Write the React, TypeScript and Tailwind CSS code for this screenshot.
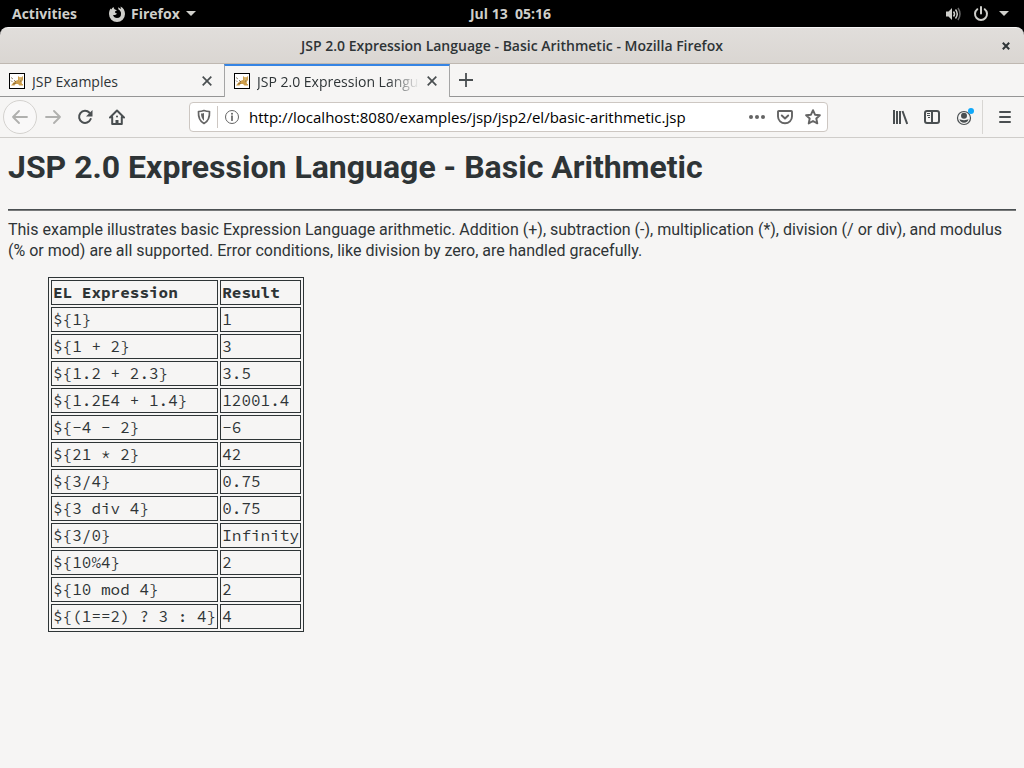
import React from "react";

const rows: [string, string][] = [
  ["${1}", "1"],
  ["${1 + 2}", "3"],
  ["${1.2 + 2.3}", "3.5"],
  ["${1.2E4 + 1.4}", "12001.4"],
  ["${-4 - 2}", "-6"],
  ["${21 * 2}", "42"],
  ["${3/4}", "0.75"],
  ["${3 div 4}", "0.75"],
  ["${3/0}", "Infinity"],
  ["${10%4}", "2"],
  ["${10 mod 4}", "2"],
  ["${(1==2) ? 3 : 4}", "4"],
];

function TomcatIcon() {
  return (
    <svg viewBox="0 0 16 16" className="size-4 shrink-0" aria-hidden="true">
      <rect x=".5" y=".5" width="15" height="15" fill="#fff" stroke="#000" />
      <path d="M2 12.500l2-2.500 2-2 3-1V3l1.500 1.300h2L14 3v4l-1.500 1.700.5 2.300h1v1.500h-3.500L9 11H6.500l-1 1.500z" fill="#cf9f4c" />
      <path d="M10 4.500h3v3h-3z" fill="#e3bf75" />
      <path d="M2 4.500l2 1.500M2 7.500l1.500 1.500M5 7l2 2M4 11l3-1M10.500 6h.8M12.300 6h.8M11 8h1.500" stroke="#6b5636" strokeWidth=".7" />
    </svg>
  );
}

function Caret() {
  return (
    <svg viewBox="0 0 10 5" className="h-[5px] w-[10px] shrink-0" aria-hidden="true">
      <path d="M0 0h10L5 5z" fill="#d0d0cc" />
    </svg>
  );
}

function CloseIcon() {
  return (
    <svg viewBox="0 0 10 10" className="size-[10px]" aria-hidden="true">
      <path d="M.7.7l8.600 8.600M9.300.7L.7 9.300" stroke="#4a4f51" strokeWidth="1.700" />
    </svg>
  );
}

export default function App() {
  return (
    <div className="flex min-h-screen flex-col bg-black font-['Open_Sans','Noto_Sans',sans-serif] text-[#2e3436]">
      <header className="grid h-[27px] grid-cols-3 items-center pr-[15px] pl-3 text-[14px] font-bold text-[#cfcfcb]">
        <div className="flex items-center gap-8">
          <button>Activities</button>
          <button className="flex items-center gap-1.5">
            <svg viewBox="0 0 16 16" className="size-4" aria-hidden="true">
              <path d="M4.500 1C3 2 2.800 2.600 2.600 3.500L1.600 2.600C.5 4 0 6 0 8a8 8 0 0 0 16 0c0-3.200-1.500-6-4.500-7.500L12 3 9 1.200l.5 2.300c1.800 1 2.700 2.500 2.500 4.500A4 4 0 0 1 8 12c-2 0-3.500-1.200-3.900-3C5.500 9.300 7 9 8 7.600 6.700 7.500 5.900 6.800 6 5.600L8 4.300C5.800 3.800 4.800 2.800 4.500 1z" fill="#cfcfcb" />
            </svg>
            <span>Firefox</span>
            <Caret />
          </button>
        </div>
        <button className="justify-self-center whitespace-pre">{"Jul 13  05:16"}</button>
        <button aria-label="System menu" className="flex items-center gap-2.5 justify-self-end">
          <span className="flex items-center gap-3">
            <svg viewBox="0 0 16 16" className="size-4" fill="none" aria-hidden="true">
              <path d="M1 5.500h2.500L7 2v12l-3.500-3.500H1z" fill="#cfcfcb" />
              <path d="M8.500 5.500q2 2.500 0 5M10.500 3.500q3.500 4.500 0 9" stroke="#cfcfcb" strokeWidth="1.500" />
              <path d="M13 2q4 6 0 12" stroke="#666" strokeWidth="1.500" />
            </svg>
            <svg viewBox="0 0 16 16" className="size-4" fill="none" stroke="#cfcfcb" strokeWidth="2" aria-hidden="true">
              <path d="M4.300 3.200a6 6 0 1 0 7.400 0M8 1v6.500" strokeLinecap="round" />
            </svg>
          </span>
          <Caret />
        </button>
      </header>

      <div className="grid h-[37px] grid-cols-[36px_1fr_36px] items-center rounded-t-lg border-t border-b border-t-[#f8f7f7] border-b-[#bfb8b1] bg-linear-to-b from-[#e1dedb] to-[#dad6d2]">
        <h2 className="col-start-2 text-center text-[14px] font-semibold">JSP 2.0 Expression Language - Basic Arithmetic - Mozilla Firefox</h2>
        <button aria-label="Close window" className="flex justify-center">
          <svg viewBox="0 0 8 8" className="size-2" aria-hidden="true">
            <path d="M.8.8l6.400 6.400M7.200.8L.8 7.200" stroke="#2e3436" strokeWidth="2" />
          </svg>
        </button>
      </div>

      <nav aria-label="Tabs" className="flex h-[33px] bg-[#f6f5f4] text-[14px]">
        <div className="flex w-56 items-center gap-[7px] border-b border-[#959595] pt-0.5 pr-3 pl-[9px]">
          <TomcatIcon />
          <button className="flex-1 overflow-hidden text-left whitespace-nowrap">JSP Examples</button>
          <button aria-label="Close JSP Examples"><CloseIcon /></button>
        </div>
        <div className="flex w-[226px] items-center gap-[7px] border-x border-t-2 border-x-[#a5a5a5] border-t-[#3584e4] pr-3 pb-px pl-[9px]">
          <TomcatIcon />
          <button className="flex-1 overflow-hidden mask-r-from-80% text-left whitespace-nowrap">JSP 2.0 Expression Language - Basic Arithmetic</button>
          <button aria-label="Close JSP 2.0 Expression Language"><CloseIcon /></button>
        </div>
        <div className="flex flex-1 items-center border-b border-[#959595] pl-[9px]">
          <button aria-label="New tab">
            <svg viewBox="0 0 14 14" className="size-[14px]" aria-hidden="true"><path d="M7 0v14M0 7h14" stroke="#4a4f51" strokeWidth="1.800" /></svg>
          </button>
        </div>
      </nav>

      <div className="flex h-[41px] items-center border-b border-[#cfcdca] bg-[#f6f5f4] pr-[11px] pl-[3px]">
        <button aria-label="Back" className="flex size-[34px] items-center justify-center rounded-full border border-[#d4d2cf] bg-[#f9f8f8]">
          <svg viewBox="0 0 16 16" className="size-4" fill="none" stroke="#b0b0ae" strokeWidth="1.800" strokeLinecap="round" strokeLinejoin="round" aria-hidden="true"><path d="M15 8H1M7 2L1 8l6 6" /></svg>
        </button>
        <button aria-label="Forward" className="ml-2">
          <svg viewBox="0 0 16 16" className="size-4" fill="none" stroke="#b0b0ae" strokeWidth="1.800" strokeLinecap="round" strokeLinejoin="round" aria-hidden="true"><path d="M1 8h14M9 2l6 6-6 6" /></svg>
        </button>
        <button aria-label="Reload" className="ml-4">
          <svg viewBox="0 0 16 16" className="size-4" aria-hidden="true"><path d="M12.500 3.800A6 6 0 1 0 13.700 10" fill="none" stroke="#4a4f51" strokeWidth="2" strokeLinecap="round" /><path d="M15.500 1v6.500H9z" fill="#4a4f51" /></svg>
        </button>
        <button aria-label="Home" className="ml-4">
          <svg viewBox="0 0 16 16" className="size-4" fill="none" stroke="#4a4f51" strokeWidth="2" strokeLinecap="round" strokeLinejoin="round" aria-hidden="true"><path d="M1 8.500L8 1.500l7 7M3.200 8v7h9.600V8" /><path d="M8 15v-4" strokeWidth="3" strokeLinecap="butt" /><path d="M8 7.500v.1" /></svg>
        </button>
        <div className="ml-16 flex h-[30px] max-w-[639px] flex-1 items-center rounded border border-[#cdc7c2] bg-white pr-1.5 pl-[5px]">
          <button aria-label="Tracking protection" className="px-px">
            <svg viewBox="0 0 16 16" className="size-4" aria-hidden="true"><path d="M8 1.500c2 .8 3.600 1 5.500 1C13.800 8 12 12.500 8 14.500 4 12.500 2.200 8 2.500 2.500c1.900 0 3.500-.2 5.500-1z" fill="none" stroke="#646464" strokeWidth="1.700" strokeLinejoin="round" /><path d="M8 4v7.800C6 10 5 7.500 5 4.500 6 4.500 7 4.400 8 4z" fill="#646464" /></svg>
          </button>
          <span className="ml-1 h-[22px] w-px bg-[#cdc7c2]" />
          <button aria-label="Site information" className="ml-1.5">
            <svg viewBox="0 0 16 16" className="size-4" aria-hidden="true"><circle cx="8" cy="8" r="6.500" fill="none" stroke="#646464" /><path d="M8 7.200v4" stroke="#646464" strokeWidth="1.700" strokeLinecap="round" /><circle cx="8" cy="4.800" r="1" fill="#646464" /></svg>
          </button>
          <input aria-label="Address" className="ml-[9px] min-w-0 flex-1 bg-transparent text-[15px] text-black outline-none" defaultValue="http://localhost:8080/examples/jsp/jsp2/el/basic-arithmetic.jsp" />
          <div className="flex items-center gap-3">
            <button aria-label="Page actions"><svg viewBox="0 0 16 16" className="size-4" fill="#646464" aria-hidden="true"><circle cx="2" cy="8" r="2" /><circle cx="8" cy="8" r="2" /><circle cx="14" cy="8" r="2" /></svg></button>
            <button aria-label="Save to Pocket"><svg viewBox="0 0 16 16" className="size-4" fill="none" stroke="#646464" strokeWidth="1.900" strokeLinecap="round" strokeLinejoin="round" aria-hidden="true"><path d="M1.800 2h12.400c.5 0 .8.300.8.800V7.500a7 6.800 0 0 1-14 0V2.800C1 2.300 1.300 2 1.800 2zM4.800 6.500L8 9.500l3.200-3" /></svg></button>
            <button aria-label="Bookmark"><svg viewBox="0 0 16 16" className="size-4" fill="none" stroke="#646464" strokeWidth="1.900" strokeLinejoin="round" aria-hidden="true"><path d="M8 1.200l2 4.500 4.900.5-3.600 3.300 1 4.900L8 12l-4.300 2.400 1-4.900L1.100 6.200 6 5.700z" /></svg></button>
          </div>
        </div>
        <div className="ml-auto flex items-center gap-4">
          <button aria-label="Library"><svg viewBox="0 0 16 16" className="size-4" stroke="#4a4f51" strokeWidth="2" aria-hidden="true"><path d="M2 1v14M5 2v13M8 2v13M10.500 2l4.700 13" /></svg></button>
          <button aria-label="Sidebar"><svg viewBox="0 0 16 16" className="size-4" fill="none" stroke="#4a4f51" aria-hidden="true"><rect x="1" y="2" width="14" height="12" rx="2" strokeWidth="2" /><path d="M8 2v12" strokeWidth="2" /><path d="M3 4.500h3M3 6.500h3M4 8.500h2" /></svg></button>
          <button aria-label="Account"><svg viewBox="0 0 18 18" className="size-[18px]" aria-hidden="true"><circle cx="8" cy="10" r="6.500" fill="none" stroke="#4a4f51" strokeWidth="1.200" /><circle cx="8" cy="7.800" r="3" fill="#4a4f51" /><path d="M3.500 11c1.500 1.500 7.500 1.500 9 0-.5 5-8.500 5-9 0z" fill="#4a4f51" /><circle cx="15" cy="3" r="3" fill="#10a9fa" /></svg></button>
          <span className="-ml-2 h-[34px] w-px bg-[#d8d6d3]" />
          <button aria-label="Menu" className="-ml-0.5"><svg viewBox="0 0 16 16" className="size-4" stroke="#4a4f51" strokeWidth="2" strokeLinecap="round" aria-hidden="true"><path d="M3 3h10M3 8h10M3 13h10" /></svg></button>
        </div>
      </div>

      <main className="flex-1 bg-[#f6f5f4] px-2 pt-2.5 font-[Roboto,sans-serif] text-[16px] leading-[21px]">
        <h1 className="text-[32px] leading-[38px] font-bold">JSP 2.0 Expression Language - Basic Arithmetic</h1>
        <hr className="mt-[23px] border-t border-b border-t-[#4b5052] border-b-[#77797a]" />
        <p className="mt-2">This example illustrates basic Expression Language arithmetic. Addition (+), subtraction (-), multiplication (*), division (/ or div), and modulus (% or mod) are all supported. Error conditions, like division by zero, are handled gracefully.</p>
        <table className="mt-4 ml-10 border-separate border-spacing-[2px] border border-[#2e3436] font-['Source_Code_Pro','Liberation_Mono',monospace] text-[16px]">
          <thead>
            <tr className="text-left">
              <th className="border border-[#2e3436] p-px">EL Expression</th>
              <th className="border border-[#2e3436] p-px">Result</th>
            </tr>
          </thead>
          <tbody>
            {rows.map(([expression, result]) => (
              <tr key={expression}>
                <td className="border border-[#2e3436] p-px">{expression}</td>
                <td className="border border-[#2e3436] p-px">{result}</td>
              </tr>
            ))}
          </tbody>
        </table>
      </main>
    </div>
  );
}
